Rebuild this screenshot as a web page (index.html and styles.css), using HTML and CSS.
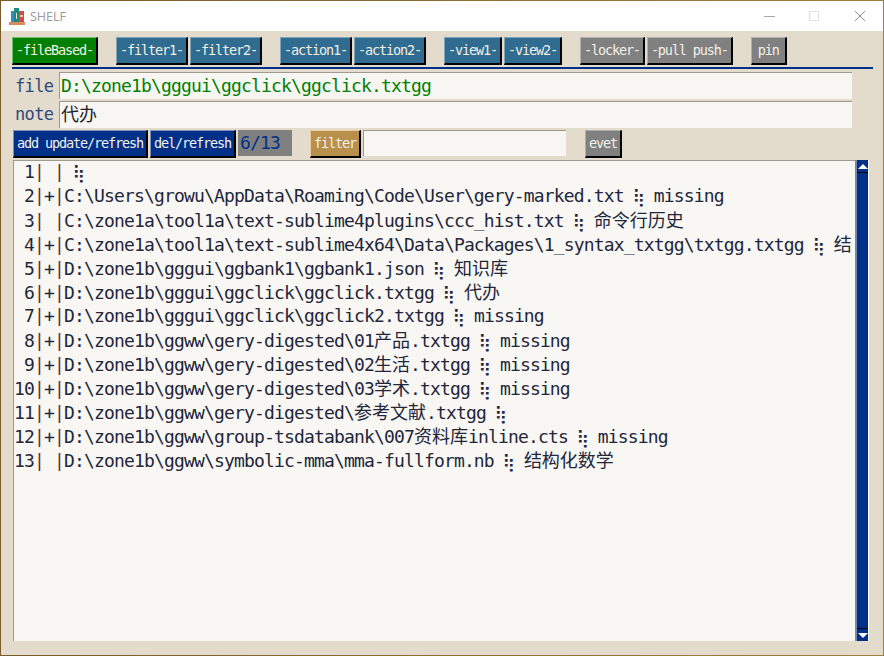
FILE: index.html
```html
<!DOCTYPE html>
<html lang="en">

<head>
    <meta charset="UTF-8">
    <title>SHELF</title>
    <link rel="stylesheet" href="styles.css">
</head>

<body>
    <div class="window">
        <div class="titlebar">
            <svg class="appicon" width="17" height="19" viewBox="0 0 17 19">
                <rect x="0" y="15" width="16" height="3" fill="#d98b5f"/>
                <rect x="2" y="4" width="4" height="11" fill="#3f86c8"/>
                <rect x="5" y="1" width="5" height="14" fill="#1f8a78"/>
                <rect x="10" y="4" width="5" height="11" fill="#d8454a"/>
                <rect x="7" y="6" width="1" height="6" fill="#e8e0c8"/>
                <rect x="11" y="8" width="3" height="2" fill="#f0c890"/>
            </svg>
            <span class="apptitle">SHELF</span>
            <div class="winctrls">
                <svg width="46" height="30" viewBox="0 0 46 30"><rect x="19" y="15" width="11" height="1" fill="#a8a8a8"/></svg>
                <svg width="46" height="30" viewBox="0 0 46 30"><rect x="18.5" y="10.5" width="9" height="9" fill="none" stroke="#e0e0e0"/></svg>
                <svg width="46" height="30" viewBox="0 0 46 30"><path d="M18 10 L28 20 M28 10 L18 20" stroke="#909090" fill="none"/></svg>
            </div>
        </div>

        <div class="content">
            <div class="toolbar">
                <div class="group">
                    <button class="btn green">-fileBased-</button>
                </div>
                <div class="group">
                    <button class="btn teal">-filter1-</button>
                    <button class="btn teal">-filter2-</button>
                </div>
                <div class="group">
                    <button class="btn teal">-action1-</button>
                    <button class="btn teal">-action2-</button>
                </div>
                <div class="group">
                    <button class="btn teal">-view1-</button>
                    <button class="btn teal">-view2-</button>
                </div>
                <div class="group">
                    <button class="btn gray">-locker-</button>
                    <button class="btn gray">-pull push-</button>
                </div>
                <div class="group">
                    <button class="btn gray pin">pin</button>
                </div>
            </div>
            <div class="rule"></div>

            <div class="field">
                <span class="fieldlabel">file</span>
                <div class="entry path">D:\zone1b\gggui\ggclick\ggclick.txtgg</div>
            </div>
            <div class="field">
                <span class="fieldlabel note">note</span>
                <div class="entry noteentry"><span class="cjk">代办</span></div>
            </div>

            <div class="actions">
                <button class="btn navy">add update/refresh</button>
                <button class="btn navy">del/refresh</button>
                <span class="count">6/13</span>
                <button class="btn tan">filter</button>
                <div class="filterinput"></div>
                <button class="btn gray evet">evet</button>
            </div>

            <div class="listarea">
                <div class="list">
<div class="line"> 1<i>|</i> <i>|</i> <b>⢷</b></div>
<div class="line"> 2<i>|</i>+<i>|</i>C:\Users\growu\AppData\Roaming\Code\User\gery-marked.txt <b>⢷</b> missing</div>
<div class="line"> 3<i>|</i> <i>|</i>C:\zone1a\tool1a\text-sublime4plugins\ccc_hist.txt <b>⢷</b> <span class="cjk">命令行历史</span></div>
<div class="line"> 4<i>|</i>+<i>|</i>C:\zone1a\tool1a\text-sublime4x64\Data\Packages\1_syntax_txtgg\txtgg.txtgg <b>⢷</b> <span class="cjk">结</span></div>
<div class="line"> 5<i>|</i>+<i>|</i>D:\zone1b\gggui\ggbank1\ggbank1.json <b>⢷</b> <span class="cjk">知识库</span></div>
<div class="line"> 6<i>|</i>+<i>|</i>D:\zone1b\gggui\ggclick\ggclick.txtgg <b>⢷</b> <span class="cjk">代办</span></div>
<div class="line"> 7<i>|</i>+<i>|</i>D:\zone1b\gggui\ggclick\ggclick2.txtgg <b>⢷</b> missing</div>
<div class="line"> 8<i>|</i>+<i>|</i>D:\zone1b\ggww\gery-digested\01<span class="cjk">产品</span>.txtgg <b>⢷</b> missing</div>
<div class="line"> 9<i>|</i>+<i>|</i>D:\zone1b\ggww\gery-digested\02<span class="cjk">生活</span>.txtgg <b>⢷</b> missing</div>
<div class="line">10<i>|</i>+<i>|</i>D:\zone1b\ggww\gery-digested\03<span class="cjk">学术</span>.txtgg <b>⢷</b> missing</div>
<div class="line">11<i>|</i>+<i>|</i>D:\zone1b\ggww\gery-digested\<span class="cjk">参考文献</span>.txtgg <b>⢷</b></div>
<div class="line">12<i>|</i>+<i>|</i>D:\zone1b\ggww\group-tsdatabank\007<span class="cjk">资料库</span>inline.cts <b>⢷</b> missing</div>
<div class="line">13<i>|</i> <i>|</i>D:\zone1b\ggww\symbolic-mma\mma-fullform.nb <b>⢷</b> <span class="cjk">结构化数学</span></div>
                </div>
                <div class="scrollbar">
                    <div class="arrow"><span class="tri up"></span></div>
                    <div class="thumb"></div>
                    <div class="arrow"><span class="tri down"></span></div>
                </div>
            </div>
        </div>
    </div>
</body>

</html>
```

FILE: styles.css
```css
body {
    margin: 0;
    height: 100vh;
    box-sizing: border-box;
    padding: 1px;
    background: linear-gradient(to right, #7a5a2a, #a08040);
    font-family: 'DejaVu Sans Mono', monospace;
    overflow: hidden;
}

.window {
    height: 100%;
    display: flex;
    flex-direction: column;
    background: #e3dccd;
}

.titlebar {
    height: 30px;
    flex: none;
    background: #ffffff;
    display: flex;
    align-items: center;
    padding-left: 8px;
}

.appicon {
    margin-right: 4px;
}

.apptitle {
    font-family: 'Open Sans', sans-serif;
    font-size: 12.5px;
    color: #9a9a9a;
}

.winctrls {
    margin-left: auto;
    display: flex;
}

.winctrls svg {
    display: block;
}

.content {
    flex: 1;
    min-height: 0;
    display: flex;
    flex-direction: column;
    padding: 6px 10px 14px 11px;
}

.toolbar {
    display: flex;
    gap: 18px;
}

.group {
    display: flex;
    gap: 2px;
}

.btn {
    height: 28px;
    box-sizing: border-box;
    padding: 0 3px 1px 3px;
    border: 1px solid;
    border-right-width: 2px;
    border-bottom-width: 2px;
    border-right-color: #000;
    border-bottom-color: #000;
    font-family: 'DejaVu Sans Mono', monospace;
    font-size: 13.5px;
    letter-spacing: -1.13px;
    color: #f4f0e8;
    white-space: pre;
}

.green {
    background: #008000;
    border-top-color: #6fbf6f;
    border-left-color: #6fbf6f;
}

.teal {
    background: #2f6c8f;
    border-top-color: #7fa5bd;
    border-left-color: #7fa5bd;
}

.gray {
    background: #808080;
    border-top-color: #b0b0b0;
    border-left-color: #b0b0b0;
}

.navy {
    background: #003087;
    border-top-color: #7d8fb8;
    border-left-color: #7d8fb8;
}

.tan {
    background: #b8904c;
    border-top-color: #f0c8a0;
    border-left-color: #f0c8a0;
}

.pin {
    width: 36px;
}

.rule {
    height: 2px;
    margin-top: 2px;
    margin-bottom: 1px;
    background: #003087;
}

.field {
    display: flex;
    align-items: center;
    height: 27px;
    margin-top: 2px;
}

.fieldlabel {
    width: 47px;
    flex: none;
    box-sizing: border-box;
    padding-left: 3px;
    font-size: 17px;
    letter-spacing: -0.65px;
    color: #2f4a7a;
}

.fieldlabel.note {
    padding-bottom: 2px;
}

.entry {
    width: 793px;
    height: 27px;
    box-sizing: border-box;
    border-top: 1px solid #a09a8e;
    border-left: 1px solid #a09a8e;
    background: #f8f6f2;
    padding-left: 1px;
    font-size: 18px;
    line-height: 26px;
    letter-spacing: -0.84px;
    color: #1f1f2a;
    white-space: pre;
}

.noteentry {
    line-height: 23px;
}

.path {
    color: #008000;
}

.actions {
    display: flex;
    height: 28px;
    margin-top: 2px;
    padding-left: 1px;
    gap: 2px;
}

.count {
    width: 54px;
    height: 26px;
    background: #808080;
    color: #003087;
    font-size: 18px;
    line-height: 26px;
    letter-spacing: -0.84px;
    padding-left: 2px;
    box-sizing: border-box;
}

.tan {
    margin-left: 16px;
}

.filterinput {
    width: 203px;
    height: 26px;
    box-sizing: border-box;
    border-top: 1px solid #a09a8e;
    border-left: 1px solid #a09a8e;
    background: #f8f6f2;
}

.evet {
    margin-left: 17px;
}

.listarea {
    flex: 1;
    min-height: 0;
    display: flex;
    margin-top: 2px;
    padding-left: 1px;
}

.list {
    width: 842px;
    flex: none;
    box-sizing: border-box;
    border-top: 1px solid #a09a8e;
    border-left: 1px solid #a09a8e;
    background: #f9f7f3;
    overflow: hidden;
}

.line {
    height: 24px;
    line-height: 21px;
    font-size: 18px;
    letter-spacing: -0.84px;
    color: #22263a;
    white-space: pre;
}

.line i {
    font-style: normal;
    color: #6a2a30;
}

.line b {
    font-family: 'DejaVu Sans', sans-serif;
    font-weight: normal;
    font-size: 13.6px;
    line-height: 1;
    display: inline-block;
    width: 10px;
    letter-spacing: 0;
    transform: scale(1.3);
}

.cjk {
    font-family: 'Noto Sans CJK SC', sans-serif;
    font-size: 18px;
    letter-spacing: 0;
}

.scrollbar {
    width: 14px;
    flex: none;
    display: flex;
    flex-direction: column;
    box-sizing: border-box;
    background: #ffffff;
    border-left: 2px solid #7787a8;
    border-right: 1px solid #ffffff;
}

.arrow {
    height: 12px;
    flex: none;
    background: #003087;
    display: flex;
    align-items: center;
    justify-content: center;
}

.thumb {
    flex: 1;
    background: #003087;
    border-top: 1px solid #000;
    border-bottom: 1px solid #000;
}

.tri {
    width: 0;
    height: 0;
    border-left: 5px solid transparent;
    border-right: 5px solid transparent;
}

.tri.up {
    border-bottom: 5px solid #fff;
}

.tri.down {
    border-top: 5px solid #fff;
}
```
